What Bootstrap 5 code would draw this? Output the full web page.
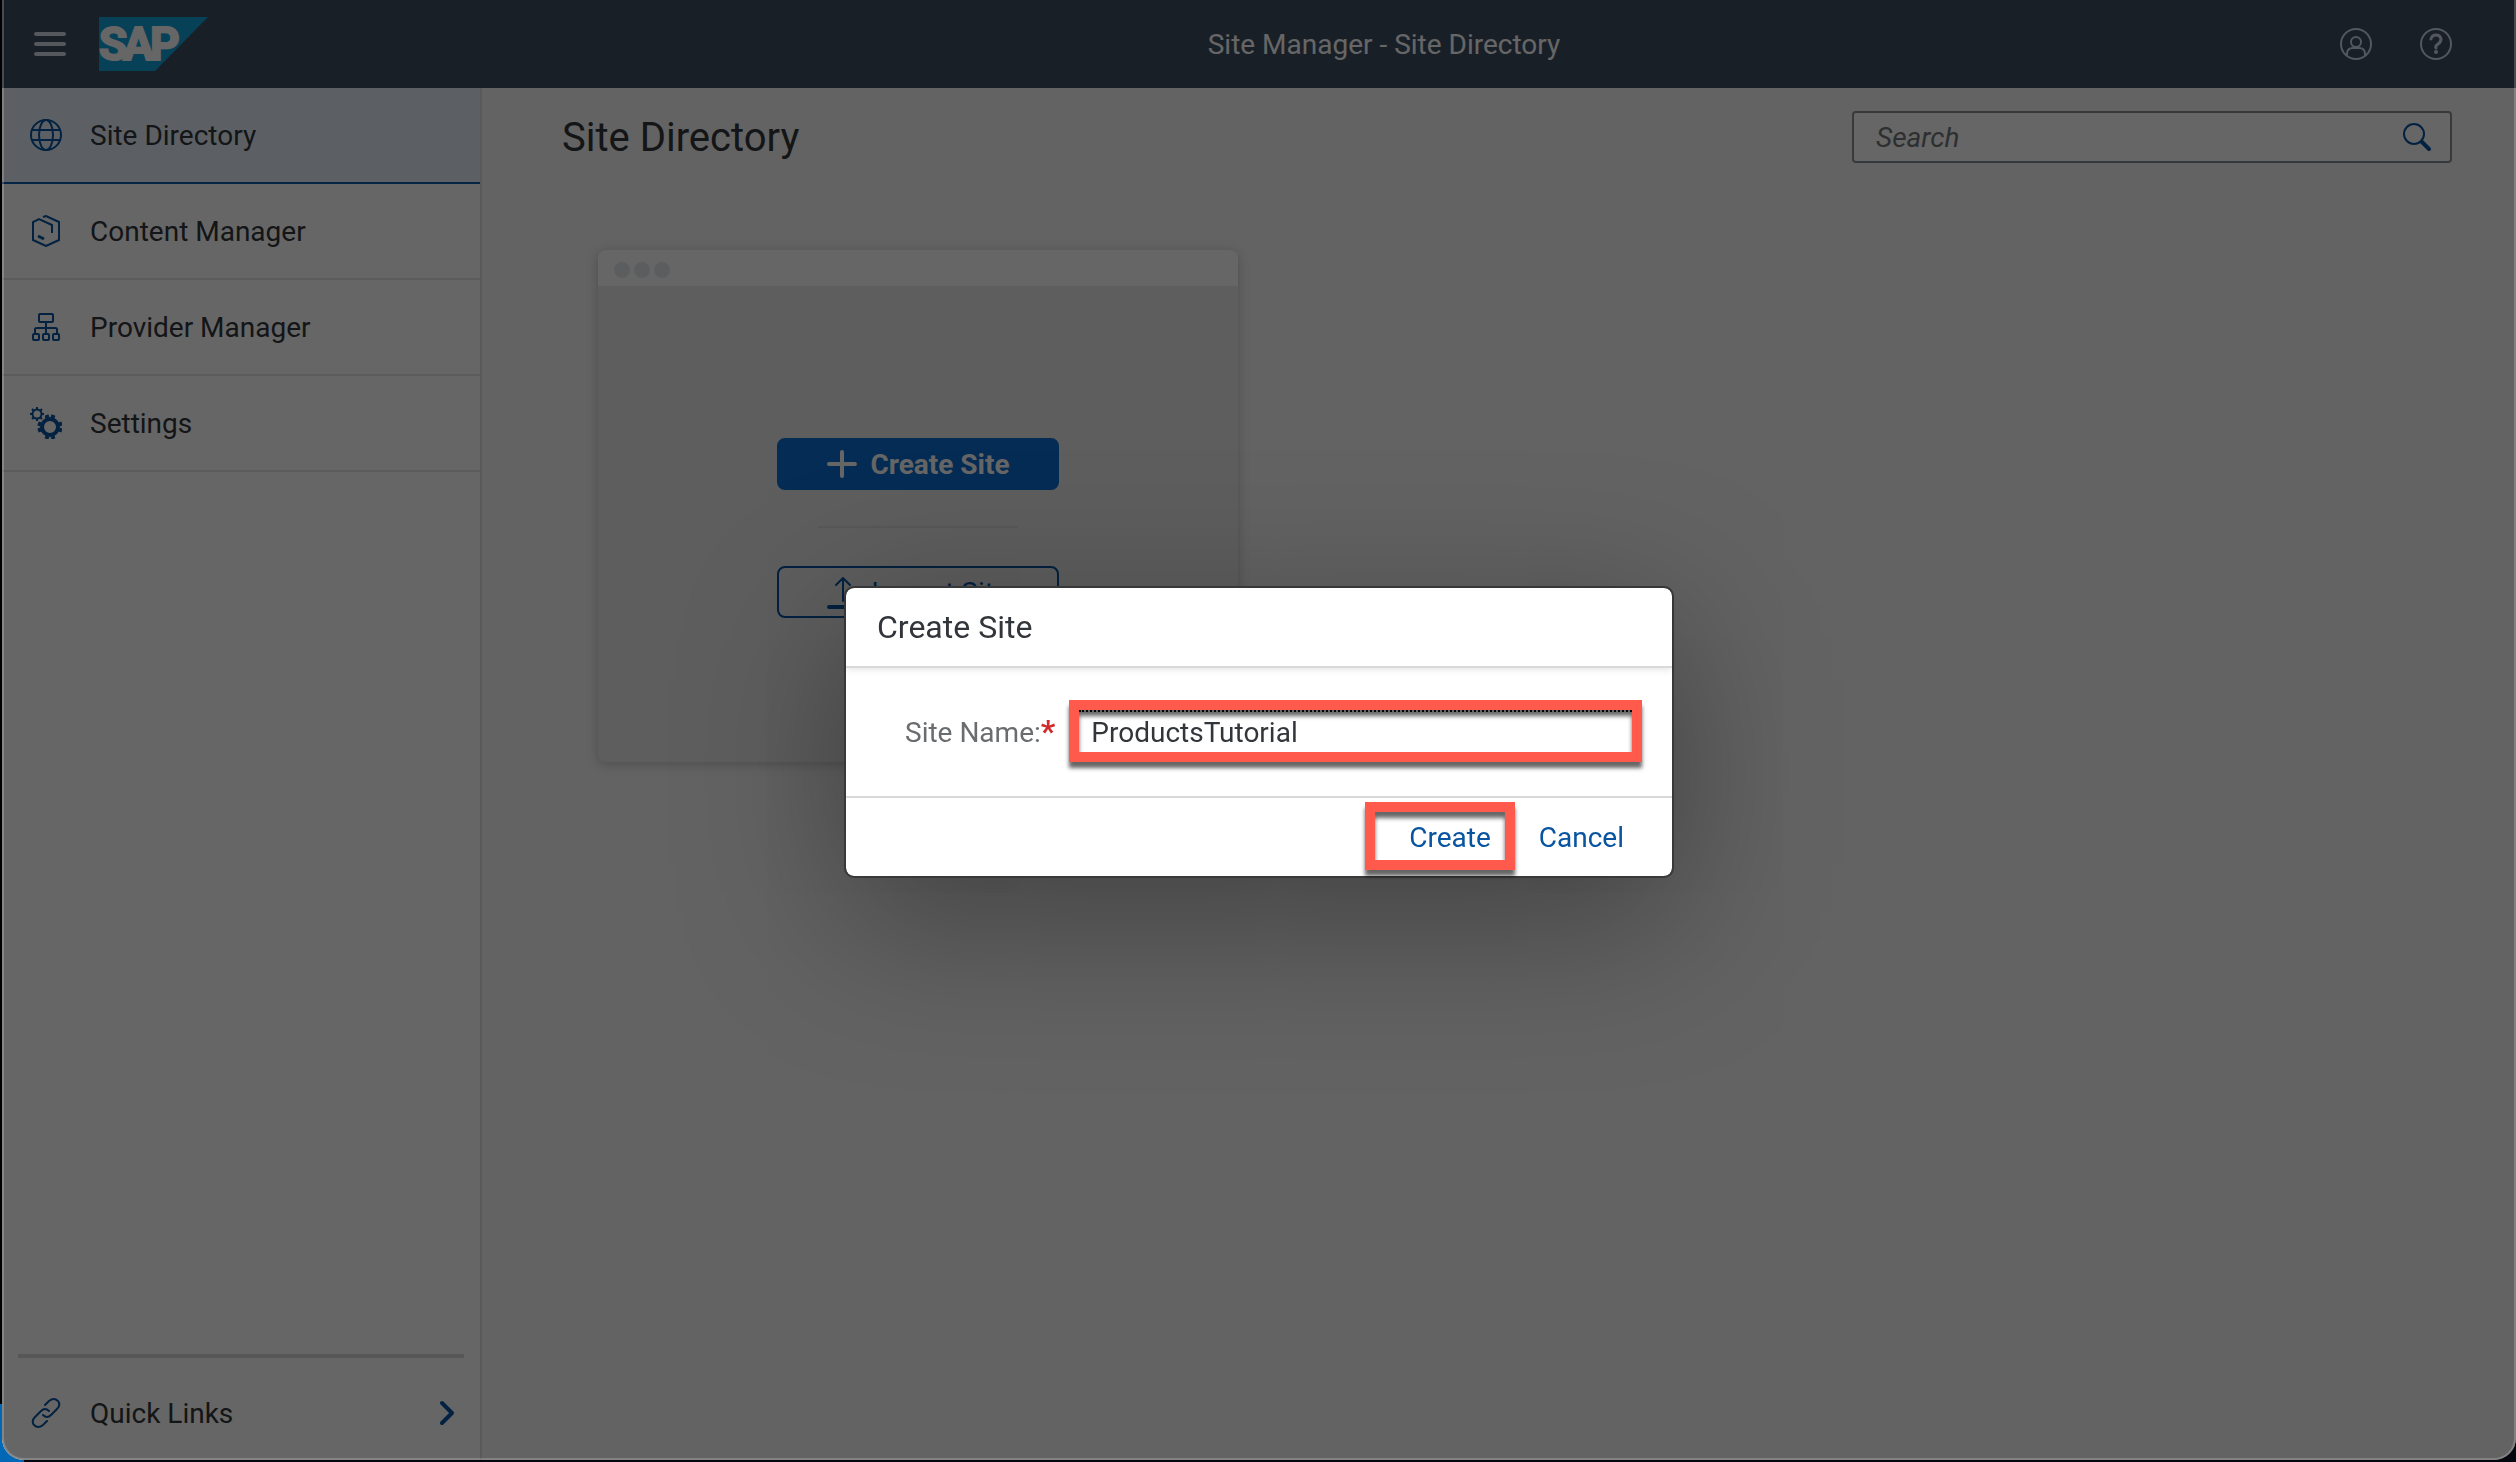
<!DOCTYPE html>
<html lang="en">
<head>
<meta charset="utf-8">
<meta name="viewport" content="width=device-width, initial-scale=1">
<title>Site Manager - Site Directory</title>
<link href="https://cdn.jsdelivr.net/npm/bootstrap@5.3.0/dist/css/bootstrap.min.css" rel="stylesheet">
<style>
  body { font-family: Roboto, "Liberation Sans", sans-serif; font-size: 28px; line-height: 36px; color: #32363a;
    background: linear-gradient(#000 0 96%, #0068b4 96%) left / 24px 100% no-repeat, #05070f; }
  .app-window { min-height: calc(100vh - 2px); margin: 0 0 2px 2px; background: #f7f7f7; border-radius: 0 0 22px 22px; overflow: hidden; position: relative; }
  .app-window::after { content: ""; position: absolute; inset: 0; z-index: 1040; border: 2px solid rgba(255,255,255,.2); border-top: 0; border-radius: inherit; pointer-events: none; }
  .shell-bar { height: 88px; background: #3c4e62; padding: 0 64px 0 32px; }
  .shell-bar .shell-title { color: #fff; padding: 2px 0 0 220px; }
  .icon-btn { background: none; border: 0; padding: 0; line-height: 0; color: #d1dbe6; }
  .shell-actions { gap: 48px; }
  .brand-gap { margin-left: 29px; line-height: 0; }
  .side-nav { width: 478px; background: #fff; border-right: 2px solid #e2e2e2; box-sizing: content-box; flex: none; }
  .side-link { height: 96px; padding: 0 24px 0 28px; gap: 28px; color: #32363a; text-decoration: none; border-bottom: 2px solid #e5e5e5; }
  .side-link.active { background: #e5f0fa; border-color: #0a5cb0; }
  .side-link span, .quick-link span { padding-top: 2px; }
  .side-link svg, .search-btn { color: #0854a0; }
  .side-foot { border-top: 4px solid #dadada; margin: 0 16px; }
  .quick-link { padding: 36px 8px 28px 12px; gap: 28px; color: #32363a; text-decoration: none; }
  .quick-link svg { color: #0854a0; }
  .page-head { padding: 20px 62px 0 80px; }
  .page-head h1 { font-size: 40px; line-height: 56px; margin: 0; padding-top: 2px; font-weight: 400; }
  .search-box { width: 600px; height: 52px; border: 2px solid #89919a; border-radius: 4px; background: #fff; padding: 0 18px 0 22px; }
  .search-box input { border: 0; outline: 0; background: none; min-width: 0; font-style: italic; padding: 2px 0 0; }
  .search-box input::placeholder { color: #74777a; opacity: 1; }
  .page-head .search-box { margin-right: 2px; }
  .site-tile { width: 640px; height: 512px; margin: 84px 0 0 116px; background: #ebebeb; border: 0; border-radius: 8px; box-shadow: 0 2px 12px rgba(0,0,0,.22); overflow: hidden; }
  .tile-bar { height: 36px; background: #fff; padding: 4px 16px 0; gap: 4px; }
  .tile-bar span { width: 16px; height: 16px; border-radius: 50%; background: #e5e9ed; }
  .tile-actions { padding-top: 152px; }
  .tile-btn { width: 282px; height: 52px; padding: 2px 0 0; border-radius: 8px; font-size: 28px; line-height: 36px; border: 2px solid #0a6ed1; }
  .tile-btn.main-action { background: #0a6ed1; color: #fff; font-weight: 700; gap: 12px; }
  .tile-btn.ghost-action { border-color: #0854a0; color: #0854a0; gap: 12px; }
  .tile-rule { width: 200px; height: 2px; background: #dcdcdc; margin: 36px 0 38px; }
  .dim { position: absolute; inset: 0; background: rgba(0,0,0,.6); z-index: 1030; }
  .site-dialog { padding: 2px 0 0 2px; }
  .site-dialog .modal-dialog { max-width: 830px; }
  .site-dialog .modal-content { border: 2px solid #38393b; border-radius: 10px; color: #32363a; box-shadow: 0 40px 160px rgba(0,0,0,.36); }
  .site-dialog .modal-header { height: 80px; padding: 0 31px; border-bottom: 2px solid #d9d9d9; box-shadow: 0 2px 6px rgba(0,0,0,.1); }
  .site-dialog .modal-title { font-size: 32px; line-height: 40px; font-weight: 400; }
  .site-dialog .modal-body { padding: 32px 30px 34px 59px; gap: 14px; }
  .site-dialog .modal-footer { padding: 4px 36px 6px; border-top: 2px solid #d9d9d9; gap: 12px; }
  .site-dialog .modal-footer > * { margin: 0; }
  .field-label { color: #6a6d70; padding-top: 4px; }
  .field-label b { color: #d02b2b; font-size: 32px; line-height: 32px; }
  .callout-frame { border: 10px solid #ff5a4c; box-shadow: 0 6px 4px rgba(0,0,0,.6), inset 0 6px 4px rgba(0,0,0,.6); }
  .callout-frame input { height: 42px; border: 0; border-top: 2px dotted #000; outline: 0; background: none; padding: 0 12px; color: #32363a; }
  .dialog-btn { background: none; border: 0; color: #0854a0; font-size: 28px; line-height: 36px; padding: 8px 12px 4px; }
  .callout-frame .dialog-btn { padding: 8px 14px 4px 34px; }
</style>
<script src="https://cdn.jsdelivr.net/npm/bootstrap@5.3.0/dist/js/bootstrap.bundle.min.js"></script>
</head>
<body>
<div class="app-window d-flex flex-column">
  <header class="shell-bar d-flex align-items-center">
    <button class="icon-btn" type="button" aria-label="Menu">
      <svg width="36" height="32" viewBox="0 0 36 32" stroke="currentColor" stroke-width="4" stroke-linecap="round"><path d="M2 6h28M2 16h28M2 26h28"/></svg>
    </button>
    <a href="#" class="brand-gap" aria-label="SAP">
      <svg width="109" height="54" viewBox="0 0 109 54"><path d="M0 0H109L56 54H0Z" fill="#12a4dc"/>
        <text y="43" x="0 24 51" font-family="Roboto, sans-serif" font-weight="700" font-size="46" fill="#fff" stroke="#fff" stroke-width="2">SAP</text></svg>
    </a>
    <div class="shell-title flex-grow-1 text-center">Site Manager - Site Directory</div>
    <div class="shell-actions d-flex">
      <button class="icon-btn" type="button" aria-label="User">
        <svg width="32" height="32" viewBox="0 0 32 32" fill="none" stroke="currentColor" stroke-width="2"><circle cx="16" cy="16" r="15"/><circle cx="16" cy="14" r="5"/><path d="M7 28v-2q0-6 6-6h6q6 0 6 6v2"/></svg>
      </button>
      <button class="icon-btn" type="button" aria-label="Help">
        <svg width="32" height="32" viewBox="0 0 32 32" fill="none" stroke="currentColor" stroke-width="2"><circle cx="16" cy="16" r="15"/><path d="M11 11q1-4 5-4t5 4q0 3-3 5t-2 4" stroke-width="3" stroke-linecap="round"/><circle cx="16" cy="24" r="2" fill="currentColor" stroke="none"/></svg>
      </button>
    </div>
  </header>

  <div class="d-flex flex-grow-1">
    <nav class="side-nav d-flex flex-column" aria-label="Main">
      <a href="#" class="side-link active d-flex align-items-center" aria-current="page">
        <svg width="32" height="32" viewBox="0 0 32 32" fill="none" stroke="currentColor" stroke-width="2"><circle cx="16" cy="16" r="15"/><ellipse cx="16" cy="16" rx="7" ry="15"/><path d="M2 11h28M2 21h28"/></svg>
        <span>Site Directory</span></a>
      <a href="#" class="side-link d-flex align-items-center">
        <svg width="32" height="32" viewBox="0 0 32 32" fill="none" stroke="currentColor" stroke-width="2"><path d="M13 2l3-1 13 6v18L16 31 3 25V7l6-3 13 6v8"/><path d="M8 21l6 3" stroke-width="3"/></svg>
        <span>Content Manager</span></a>
      <a href="#" class="side-link d-flex align-items-center">
        <svg width="32" height="32" viewBox="0 0 32 32" fill="none" stroke="currentColor" stroke-width="2"><rect x="9" y="3" width="14" height="8" rx="1"/><path d="M16 11v12M5 23v-5q0-1 2-1h18q2 0 2 1v5"/><rect x="3" y="23" width="6" height="6" rx="1"/><rect x="13" y="23" width="6" height="6" rx="1"/><rect x="23" y="23" width="6" height="6" rx="1"/></svg>
        <span>Provider Manager</span></a>
      <a href="#" class="side-link d-flex align-items-center">
        <svg width="32" height="32" viewBox="0 0 32 32" fill="none" stroke="currentColor"><circle cx="7" cy="7" r="4.5" stroke-width="2"/><path d="M7 0v3M7 11v3M0 7h3M11 7h3M2 2l2 2M10 10l2 2M12 2l-2 2M2 12l2-2" stroke-width="2"/><circle cx="20" cy="20" r="8" stroke-width="4"/><path d="M22.500 11l1-3M17.500 11l-1-3M22.500 29l1 3M17.500 29l-1 3M29 22.500l3 1M29 17.500l3-1M11 22.500l-3 1M11 17.500l-3-1" stroke-width="4"/></svg>
        <span>Settings</span></a>
      <div class="side-foot mt-auto">
        <a href="#" class="quick-link d-flex align-items-center">
          <svg width="32" height="32" viewBox="0 0 32 32" fill="none" stroke="currentColor" stroke-width="2" stroke-linecap="round"><path d="M15 8l4-4q5-4 9 0 3 4-1 8l-6 6q-4 4-8 0M17 24l-4 4q-5 4-9 0-3-4 1-8l6-6q4-4 8 0"/></svg>
          <span class="flex-grow-1">Quick Links</span>
          <svg width="18" height="28" viewBox="0 0 18 28" fill="none" stroke="currentColor" stroke-width="4" stroke-linecap="round" stroke-linejoin="round"><path d="M4 4l10 10L4 24"/></svg></a>
      </div>
    </nav>

    <main class="flex-grow-1">
      <div class="page-head d-flex justify-content-between align-items-center">
        <h1>Site Directory</h1>
        <div class="search-box d-flex align-items-center" role="search">
          <input type="search" class="flex-grow-1" placeholder="Search" aria-label="Search">
          <button class="icon-btn search-btn" type="button" aria-label="Run search">
            <svg width="30" height="30" viewBox="0 0 30 30" fill="none" stroke="currentColor"><circle cx="12" cy="12" r="10" stroke-width="2"/><path d="M20 20l7 7" stroke-width="4" stroke-linecap="round"/></svg>
          </button>
        </div>
      </div>
      <section class="site-tile card" aria-label="New site">
        <div class="tile-bar d-flex align-items-center"><span></span><span></span><span></span></div>
        <div class="tile-actions d-flex flex-column align-items-center">
          <button type="button" class="btn tile-btn main-action d-flex align-items-center justify-content-center">
            <svg width="32" height="32" viewBox="0 0 32 32" stroke="currentColor" stroke-width="4" stroke-linecap="round"><path d="M16 3v24M3 15h26"/></svg>Create Site</button>
          <div class="tile-rule"></div>
          <button type="button" class="btn tile-btn ghost-action d-flex align-items-center justify-content-center">
            <svg width="32" height="32" viewBox="0 0 32 32" fill="none" stroke="currentColor" stroke-width="2" stroke-linecap="round"><path d="M16 24V1M9 8l7-7 7 7"/><path d="M2 30h28" stroke-width="4"/></svg>Import Site</button>
        </div>
      </section>
    </main>
  </div>
  <div class="dim"></div>
</div>

<div class="modal site-dialog d-block" tabindex="-1" role="dialog" aria-labelledby="dlgTitle">
  <div class="modal-dialog modal-dialog-centered">
    <form class="modal-content">
      <div class="modal-header"><h2 class="modal-title" id="dlgTitle">Create Site</h2></div>
      <div class="modal-body d-flex align-items-center">
        <label for="siteName" class="field-label">Site Name:<b>*</b></label>
        <div class="callout-frame flex-grow-1 d-flex"><input id="siteName" class="w-100" type="text" value="ProductsTutorial"></div>
      </div>
      <div class="modal-footer">
        <div class="callout-frame"><button type="button" class="dialog-btn">Create</button></div>
        <button type="button" class="dialog-btn">Cancel</button>
      </div>
    </form>
  </div>
</div>
</body>
</html>
